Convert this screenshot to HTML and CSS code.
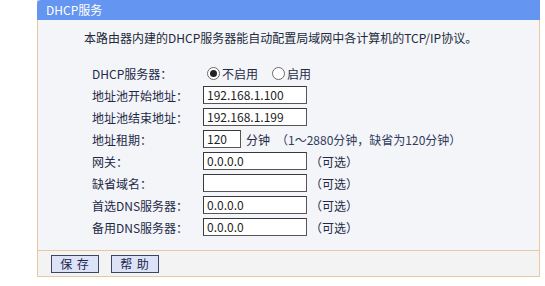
FILE: index.html
```html
<!DOCTYPE html>
<html>
<head>
    <title>DHCP服务</title>
    <meta charset="utf-8">
    <link rel="stylesheet" href="styles.css">
</head>

<body>
    <div id="painel">
        <div class="titulo">DHCP服务</div>

        <div class="conteudo">
            <p class="intro">本路由器内建的DHCP服务器能自动配置局域网中各计算机的TCP/IP协议。</p>

            <div class="linha">
                <span class="rotulo">DHCP服务器：</span>
                <span class="radio marcado"></span><span class="opcao">不启用</span>
                <span class="radio"></span><span class="opcao">启用</span>
            </div>
            <div class="linha">
                <span class="rotulo">地址池开始地址：</span>
                <span class="campo">192.168.1.100</span>
            </div>
            <div class="linha">
                <span class="rotulo">地址池结束地址：</span>
                <span class="campo">192.168.1.199</span>
            </div>
            <div class="linha">
                <span class="rotulo">地址租期：</span>
                <span class="campo curto">120</span>
                <span class="unidade">分钟</span>
                <span class="dica">（1～2880分钟，缺省为120分钟）</span>
            </div>
            <div class="linha">
                <span class="rotulo">网关：</span>
                <span class="campo">0.0.0.0</span>
                <span class="opcional">（可选）</span>
            </div>
            <div class="linha">
                <span class="rotulo">缺省域名：</span>
                <span class="campo"></span>
                <span class="opcional">（可选）</span>
            </div>
            <div class="linha">
                <span class="rotulo">首选DNS服务器：</span>
                <span class="campo">0.0.0.0</span>
                <span class="opcional">（可选）</span>
            </div>
            <div class="linha">
                <span class="rotulo">备用DNS服务器：</span>
                <span class="campo">0.0.0.0</span>
                <span class="opcional">（可选）</span>
            </div>
        </div>

        <div class="rodape">
            <button type="button" class="botao">保 存</button>
            <button type="button" class="botao">帮 助</button>
        </div>
    </div>
</body>
</html>
```

FILE: styles.css
```css
body {
    margin: 0;
    background: #ffffff;
    font-family: "Noto Sans CJK SC", sans-serif;
    font-size: 12px;
    color: #1e2a47;
}

#painel {
    margin-left: 37px;
    width: 501px;
    border: 1px solid #e8c89e;
    border-top: none;
    background: #f4f5f9;
}

.titulo {
    height: 20px;
    line-height: 20px;
    padding-left: 9px;
    margin: 0 -1px 0 -1px;
    background: #6395f1;
    color: #ffffff;
    border-top-left-radius: 4px;
}

.conteudo {
    padding: 7px 0 12px 46px;
}

.intro {
    margin: 0 0 13px 0;
    line-height: 22px;
    color: #222a3a;
}

.linha {
    display: flex;
    align-items: center;
    height: 22px;
    padding-left: 8px;
}

.rotulo {
    width: 111px;
    flex-shrink: 0;
}

.campo {
    box-sizing: border-box;
    width: 104px;
    height: 18px;
    line-height: 16px;
    padding-left: 3px;
    background: #ffffff;
    border: 1px solid #3a3a3a;
    border-right-color: #555;
    border-bottom-color: #555;
    color: #222;
}

.campo.curto {
    width: 38px;
}

.unidade {
    margin-left: 5px;
}

.dica {
    margin-left: 6px;
    color: #2f3b5c;
}

.opcional {
    margin-left: 3px;
}

.radio {
    box-sizing: border-box;
    width: 13px;
    height: 13px;
    margin: 0 2px 0 4px;
    border: 1px solid #6a6a6a;
    border-radius: 50%;
    background: #ffffff;
    position: relative;
}

.radio.marcado::after {
    content: "";
    position: absolute;
    left: 2px;
    top: 2px;
    width: 7px;
    height: 7px;
    border-radius: 50%;
    background: #222;
}

.opcao {
    margin-right: 10px;
}

.rodape {
    border-top: 1px solid #e8c89e;
    background: #f3f3f3;
    padding: 4px 0 3px 13px;
    display: flex;
    gap: 12px;
}

.botao {
    width: 48px;
    height: 18px;
    padding: 0;
    font-family: "Noto Sans CJK SC", sans-serif;
    font-size: 12px;
    line-height: 16px;
    color: #1b2550;
    background: #dde3f6;
    border: 1px solid #3d4560;
    letter-spacing: 1px;
}
```
